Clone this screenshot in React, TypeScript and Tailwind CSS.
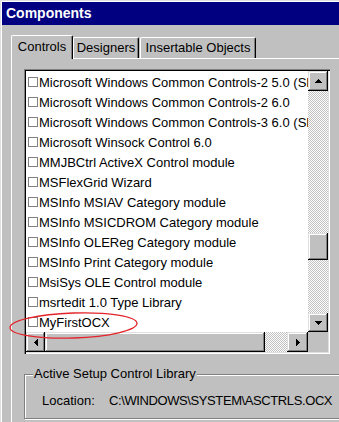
import React from "react";

const raised =
  "bg-[#c0c0c0] shadow-[inset_-1px_-1px_0_#000000,inset_1px_1px_0_#dfdfdf,inset_-2px_-2px_0_#808080,inset_2px_2px_0_#ffffff]";
const dither =
  "bg-[repeating-conic-gradient(#c0c0c0_0%_25%,#ffffff_0%_50%)] bg-[length:2px_2px]";

const items = [
  "Microsoft Windows Common Controls-2 5.0 (SP2)",
  "Microsoft Windows Common Controls-2 6.0",
  "Microsoft Windows Common Controls-3 6.0 (SP4)",
  "Microsoft Winsock Control 6.0",
  "MMJBCtrl ActiveX Control module",
  "MSFlexGrid Wizard",
  "MSInfo MSIAV Category module",
  "MSInfo MSICDROM Category module",
  "MSInfo OLEReg Category module",
  "MSInfo Print Category module",
  "MsiSys OLE Control module",
  "msrtedit 1.0 Type Library",
  "MyFirstOCX",
];

function UpArrow() {
  return (
    <svg width="7" height="4" shapeRendering="crispEdges">
      <rect x="3" y="0" width="1" height="1" fill="#000" />
      <rect x="2" y="1" width="3" height="1" fill="#000" />
      <rect x="1" y="2" width="5" height="1" fill="#000" />
      <rect x="0" y="3" width="7" height="1" fill="#000" />
    </svg>
  );
}
function DownArrow() {
  return (
    <svg width="7" height="4" shapeRendering="crispEdges">
      <rect x="0" y="0" width="7" height="1" fill="#000" />
      <rect x="1" y="1" width="5" height="1" fill="#000" />
      <rect x="2" y="2" width="3" height="1" fill="#000" />
      <rect x="3" y="3" width="1" height="1" fill="#000" />
    </svg>
  );
}
function LeftArrow() {
  return (
    <svg width="4" height="7" shapeRendering="crispEdges">
      <rect x="3" y="0" width="1" height="7" fill="#000" />
      <rect x="2" y="1" width="1" height="5" fill="#000" />
      <rect x="1" y="2" width="1" height="3" fill="#000" />
      <rect x="0" y="3" width="1" height="1" fill="#000" />
    </svg>
  );
}
function RightArrow() {
  return (
    <svg width="4" height="7" shapeRendering="crispEdges">
      <rect x="0" y="0" width="1" height="7" fill="#000" />
      <rect x="1" y="1" width="1" height="5" fill="#000" />
      <rect x="2" y="2" width="1" height="3" fill="#000" />
      <rect x="3" y="3" width="1" height="1" fill="#000" />
    </svg>
  );
}

export default function App() {
  return (
    <div className="relative w-[339px] h-[422px] overflow-hidden bg-[#c0c0c0] pt-[2px] pl-[2px] shadow-[inset_1px_1px_0_#dfdfdf,inset_2px_2px_0_#ffffff] font-['Liberation_Sans',Arial,sans-serif] text-[13px] leading-[15px] text-black">
      {/* Title bar */}
      <div className="h-[23px] bg-[#000080] flex items-center pl-[4px] text-white font-bold text-[14px]">
        Components
      </div>

      <div className="pl-[9px] pt-[10px]">
        {/* Tabs */}
        <div className="flex items-end h-[23px]">
          <div className="relative z-10 -mb-[1px] h-[24px] w-[62px] bg-[#c0c0c0] border-l border-t border-white border-r border-r-black shadow-[inset_-1px_0_0_#808080] rounded-t-[2px] pt-[3px] text-center whitespace-nowrap">
            Controls
          </div>
          <div className="h-[21px] w-[66px] bg-[#c0c0c0] border-l border-t border-white border-r border-r-black shadow-[inset_-1px_0_0_#808080] rounded-t-[2px] pt-[2px] text-center whitespace-nowrap">
            Designers
          </div>
          <div className="ml-[1px] h-[21px] w-[116px] bg-[#c0c0c0] border-l border-t border-white border-r border-r-black shadow-[inset_-1px_0_0_#808080] rounded-t-[2px] pt-[2px] text-center whitespace-nowrap">
            Insertable Objects
          </div>
        </div>

        {/* Tab page */}
        <div className="border-t border-l border-white h-[400px] pl-[12px] pt-[10px]">
          {/* List box */}
          <div className="w-[306px] h-[285px] p-[2px] shadow-[inset_1px_1px_0_#808080,inset_2px_2px_0_#000000,inset_-1px_-1px_0_#ffffff,inset_-2px_-2px_0_#dfdfdf] flex flex-col">
            <div className="flex h-[261px]">
              <div className="w-[282px] h-[261px] bg-white overflow-hidden pt-[1px]">
                {items.map((t) => (
                  <div key={t} className="h-[20px] flex items-center pl-[2px] whitespace-nowrap">
                    <div className="w-[10px] h-[10px] shrink-0 border border-[#808080] bg-white" />
                    <span className="ml-[1px]">{t}</span>
                  </div>
                ))}
              </div>
              {/* vertical scrollbar */}
              <div className="w-[20px] h-[261px] flex flex-col">
                <div className={`h-[20px] flex items-center justify-center ${raised}`}>
                  <UpArrow />
                </div>
                <div className={`flex-1 pt-[142px] ${dither}`}>
                  <div className={`h-[27px] ${raised}`} />
                </div>
                <div className={`h-[19px] flex items-center justify-center ${raised}`}>
                  <DownArrow />
                </div>
              </div>
            </div>
            {/* horizontal scrollbar */}
            <div className="flex h-[20px]">
              <div className={`w-[19px] flex items-center justify-center ${raised}`}>
                <LeftArrow />
              </div>
              <div className={`w-[220px] ${raised}`} />
              <div className={`w-[22px] ${dither}`} />
              <div className={`w-[21px] flex items-center justify-center ${raised}`}>
                <RightArrow />
              </div>
              <div className="w-[20px] bg-[#c0c0c0]" />
            </div>
          </div>

          {/* Group box */}
          <div className="relative mt-[20px] w-[330px] h-[45px] border border-[#808080] shadow-[inset_1px_1px_0_#ffffff,1px_1px_0_#ffffff] pl-[17px] pt-[18px] flex">
            <div className="absolute -top-[9px] left-[8px] px-[1px] bg-[#c0c0c0] whitespace-nowrap">
              Active Setup Control Library
            </div>
            <div className="w-[67px]">Location:</div>
            <div className="whitespace-nowrap tracking-[-0.4px]">{"C:\\WINDOWS\\SYSTEM\\ASCTRLS.OCX"}</div>
          </div>
        </div>
      </div>

      {/* Red annotation ellipse */}
      <svg className="absolute left-0 top-0 pointer-events-none" width="339" height="422">
        <ellipse
          cx="73.5"
          cy="325.5"
          rx="63.5"
          ry="12.5"
          transform="rotate(-2 73.5 325.5)"
          fill="none"
          stroke="#e3242b"
          strokeWidth="1.3"
        />
      </svg>
    </div>
  );
}
